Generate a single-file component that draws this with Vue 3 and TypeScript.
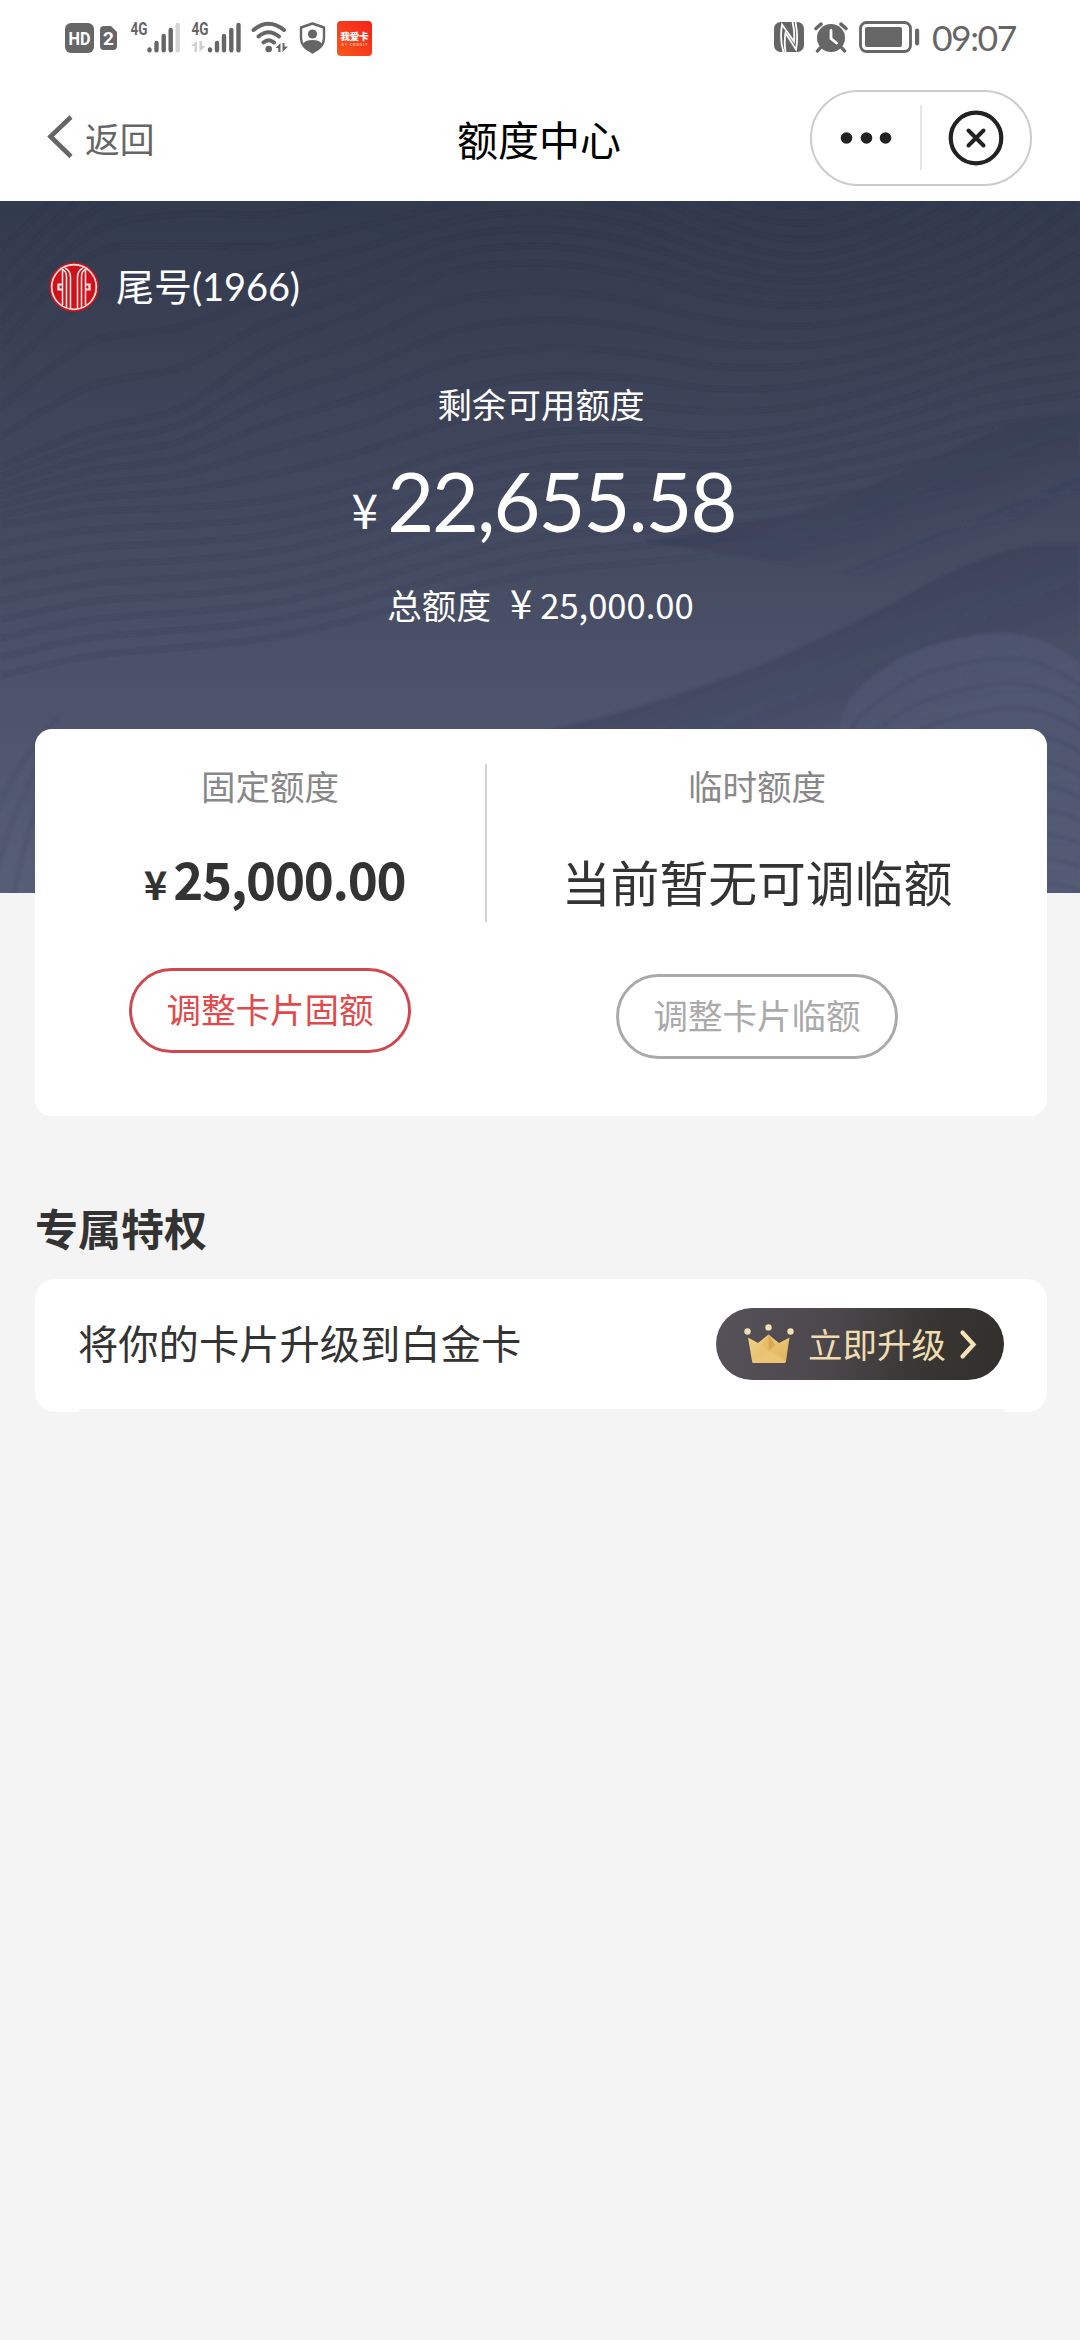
<script setup lang="ts">
type Point = [number, number]

// Contour key curves: heights sampled every 90px across the hero.
const STEP = 90
const keyCurves: number[][] = [
  [250, 170, 120, 120, 110, 100, 110, 140, 175, 190, 160, 90, 0],
  [347, 256, 246, 246, 227, 205, 195, 208, 240, 256, 230, 180, 110],
  [467, 430, 408, 347, 313, 272, 263, 275, 298, 306, 293, 265, 200],
  [525, 512, 508, 500, 480, 452, 433, 430, 435, 424, 400, 370, 355],
  [695, 674, 665, 655, 635, 610, 590, 580, 570, 560, 550, 540, 530],
]
const linesBetween = [4, 4, 6, 9]

function smooth(points: Point[]): string {
  let d = `M${points[0][0]} ${points[0][1]}`
  for (let i = 0; i < points.length - 1; i++) {
    const a = points[Math.max(i - 1, 0)]
    const b = points[i]
    const c = points[i + 1]
    const e = points[Math.min(i + 2, points.length - 1)]
    d += `C${(b[0] + (c[0] - a[0]) / 6).toFixed(1)} ${(b[1] + (c[1] - a[1]) / 6).toFixed(1)} `
    d += `${(c[0] - (e[0] - b[0]) / 6).toFixed(1)} ${(c[1] - (e[1] - b[1]) / 6).toFixed(1)} ${c[0]} ${c[1]}`
  }
  return d
}

const contours: string[] = []
linesBetween.forEach((count, k) => {
  for (let n = 0; n < count; n++) {
    const t = n / count
    contours.push(
      smooth(keyCurves[k].map((y, i): Point => [i * STEP, y + (keyCurves[k + 1][i] - y) * t])),
    )
  }
})

const ridgeOne = smooth([[640, 541], [690, 534], [747, 523], [798, 512], [850, 493], [919, 463], [988, 433], [1040, 418], [1080, 413]])
const ridgeTwo = smooth([[480, 745], [620, 712], [747, 670], [815, 640], [884, 607], [953, 570], [1022, 547], [1080, 543]])
const hill = smooth([[836, 745], [850, 700], [880, 672], [919, 650], [988, 634], [1040, 640], [1080, 662]])
const hillLines = [1, 2, 3, 4, 5, 6, 7, 8, 9, 10]
const edgeLines = [0, 1, 2, 3]
</script>

<template>
  <div class="screen">
    <div class="status">
      <svg class="hd" width="29" height="30" viewBox="0 0 29 30">
        <rect width="29" height="30" rx="6" fill="#666" />
        <text x="14.5" y="21.5" text-anchor="middle" textLength="22" lengthAdjust="spacingAndGlyphs" font-size="18" font-weight="700" fill="#fff">HD</text>
      </svg>
      <svg class="sim" width="17" height="24" viewBox="0 0 17 24">
        <path d="M4 0H11L17 6V20Q17 24 13 24H4Q0 24 0 20V4Q0 0 4 0Z" fill="#666" />
        <text x="8.5" y="19" text-anchor="middle" font-size="19" font-weight="700" fill="#fff">2</text>
      </svg>
      <svg class="sig sig1" width="50" height="42" viewBox="0 -10 50 42">
        <text x="0.500" y="14" font-size="18.500" font-weight="700" textLength="17" lengthAdjust="spacingAndGlyphs" fill="#666">4G</text>
        <g stroke="#666" stroke-width="4.4" stroke-linecap="round">
          <path d="M19.5 28.4V29.2M26.5 22V29.2M33.7 15V29.2M40.7 9V29.2" />
          <path d="M47.7 4V29.2" stroke="#d5d5d5" />
        </g>
      </svg>
      <svg class="sig sig2" width="50" height="42" viewBox="0 -10 50 42">
        <text x="0.500" y="14" font-size="18.500" font-weight="700" textLength="17" lengthAdjust="spacingAndGlyphs" fill="#666">4G</text>
        <path d="M6 20V31H3.5V25H0ZM8.500 20H11V25H14.500L8.500 31Z" fill="#d0d0d0" />
        <path d="M19 28.400V29.200M26 22V29.200M33 15V29.200M40.300 9V29.200M47.500 4V29.200" stroke="#666" stroke-width="4.400" stroke-linecap="round" />
      </svg>
      <svg class="wifi" width="38" height="32" viewBox="0 0 38 32">
        <g fill="none" stroke="#666" stroke-width="4" stroke-linecap="round">
          <path d="M2.500 9Q17.500 -3.500 33 9" />
          <path d="M7.500 15.500Q17.500 7 28 15.500" />
          <path d="M12.500 21.500Q17.500 17 23 21.500" />
        </g>
        <circle cx="17.700" cy="28" r="3.300" fill="#666" />
        <path d="M29.500 22V31H27.300V27H24.500ZM31.500 22V31L37 25.500H33.500V22Z" fill="#666" />
      </svg>
      <svg class="shield" width="27" height="32" viewBox="0 0 27 32">
        <path d="M13.500 1.500L25 5.500V16Q25 25 13.500 30.500Q2 25 2 16V5.500Z" fill="#fff" stroke="#666" stroke-width="2.400" stroke-linejoin="round" />
        <circle cx="13.500" cy="12" r="4.600" fill="#666" />
        <path d="M4 22Q6 18 13.500 18Q21 18 23 22Q20 27 13.500 30.500Q7 27 4 22Z" fill="#666" />
      </svg>
      <svg class="app" width="35" height="35" viewBox="0 0 35 35">
        <defs>
          <linearGradient id="appRed" x1="1" y1="0" x2="0" y2="1">
            <stop offset="0" stop-color="#f51f1b" />
            <stop offset="1" stop-color="#f75a1c" />
          </linearGradient>
        </defs>
        <rect width="35" height="35" rx="4" fill="url(#appRed)" />
        <text x="17.500" y="19" text-anchor="middle" font-size="9.500" font-weight="900" textLength="28" fill="#fff">我爱卡</text>
        <text x="17.500" y="25" text-anchor="middle" font-size="4" font-weight="700" textLength="26" fill="#ffc0a0">51 CREDIT</text>
      </svg>
      <svg class="nfc" width="30" height="30" viewBox="0 0 30 30">
        <rect width="30" height="30" rx="6.500" fill="#666" />
        <path d="M9.500 30Q5.500 18 8 2.500L20 19.500Q21 10 18.500 0" fill="none" stroke="#fff" stroke-width="1.800" />
        <path d="M11.500 30Q10 20 11.500 11L22 27.500Q24.500 15 21.500 0" fill="none" stroke="#fff" stroke-width="1.800" />
      </svg>
      <svg class="alarm" width="34" height="31" viewBox="0 0 34 31">
        <circle cx="17" cy="16" r="14" fill="#666" />
        <path d="M2 6.500L7 2.200M32 6.500L27 2.200M6 26L3.500 29M28 26L30.500 29" stroke="#666" stroke-width="3.500" stroke-linecap="round" />
        <path d="M17 8.500V16.500L22.500 21" fill="none" stroke="#fff" stroke-width="2.800" stroke-linecap="round" />
      </svg>
      <svg class="battery" width="61" height="32" viewBox="0 0 61 32">
        <rect x="1.500" y="1.500" width="50" height="29" rx="6" fill="none" stroke="#666" stroke-width="2.800" />
        <rect x="6" y="6" width="37" height="20" rx="2" fill="#666" />
        <rect x="56" y="7.500" width="4.200" height="17" rx="2" fill="#666" />
      </svg>
      <span class="time">09:07</span>
    </div>

    <div class="nav">
      <div class="back">
        <svg width="27" height="44" viewBox="0 0 27 44">
          <path d="M25 2L4.500 21.500L25 41.500" fill="none" stroke="#666" stroke-width="4.600" />
        </svg>
        <span>返回</span>
      </div>
      <div class="title">额度中心</div>
      <div class="capsule">
        <svg class="dots" width="54" height="14" viewBox="0 0 54 14">
          <circle cx="7.500" cy="7" r="5.800" fill="#222" />
          <circle cx="27.500" cy="7" r="5.800" fill="#222" />
          <circle cx="46.500" cy="7" r="5.800" fill="#222" />
        </svg>
        <i class="bar"></i>
        <svg width="56" height="56" viewBox="0 0 56 56">
          <circle cx="28" cy="28" r="25.300" fill="none" stroke="#222" stroke-width="4.200" />
          <path d="M20.500 20.500L35.500 35.500M35.500 20.500L20.500 35.500" stroke="#222" stroke-width="4" stroke-linecap="round" />
        </svg>
      </div>
    </div>

    <div class="hero">
      <svg class="waves" width="1080" height="692" viewBox="0 201 1080 692">
        <defs>
          <linearGradient id="shadeOne" gradientUnits="userSpaceOnUse" x1="900" y1="460" x2="940" y2="560">
            <stop offset="0" stop-color="#2b2f4c" stop-opacity=".3" />
            <stop offset="1" stop-color="#2b2f4c" stop-opacity="0" />
          </linearGradient>
          <linearGradient id="shadeTwo" gradientUnits="userSpaceOnUse" x1="850" y1="615" x2="900" y2="735">
            <stop offset="0" stop-color="#2b2f4c" stop-opacity=".3" />
            <stop offset="1" stop-color="#2b2f4c" stop-opacity=".06" />
          </linearGradient>
          <linearGradient id="shadeHill" x1="0" y1="0" x2="0" y2="1">
            <stop offset="0" stop-color="#5a6182" stop-opacity=".4" />
            <stop offset="1" stop-color="#5a6182" stop-opacity="0" />
          </linearGradient>
          <linearGradient id="fadeRight" gradientUnits="userSpaceOnUse" x1="600" y1="430" x2="760" y2="560">
            <stop offset="0" stop-color="#fff" />
            <stop offset=".5" stop-color="#fff" />
            <stop offset="1" stop-color="#333" />
          </linearGradient>
          <mask id="contourMask" maskUnits="userSpaceOnUse" x="0" y="201" width="1080" height="692">
            <rect x="0" y="201" width="1080" height="692" fill="#fff" />
            <path :d="ridgeOne + 'V893H480V560Z'" fill="url(#fadeRight)" />
          </mask>
          <filter id="soft" x="-5%" y="-5%" width="110%" height="110%">
            <feGaussianBlur stdDeviation="1.400" />
          </filter>
        </defs>
        <g filter="url(#soft)">
          <g fill="none" stroke="#272c48" stroke-opacity=".18" stroke-width="4" mask="url(#contourMask)">
            <path v-for="(d, i) in contours" :key="i" :d="d" />
          </g>
          <path :d="ridgeOne + 'V640C900 575 760 560 640 541Z'" fill="url(#shadeOne)" />
          <path :d="ridgeTwo + 'V893H480Z'" fill="url(#shadeTwo)" />
          <path :d="hill + 'V893H836Z'" fill="url(#shadeHill)" />
          <g fill="none" stroke="#3a4060" stroke-opacity=".24" stroke-width="4">
            <path v-for="n in hillLines" :key="n" :d="hill" :transform="`translate(${n * 4} ${n * 25})`" />
            <path v-for="n in edgeLines" :key="'e' + n" :d="`M${-30 + n * 22} 893Q${-10 + n * 20} ${790 + n * 10} 60 ${715 + n * 22}`" />
          </g>
        </g>
      </svg>
      <div class="bank">
        <svg width="50" height="50" viewBox="0 0 50 50">
          <circle cx="25" cy="25" r="24.800" fill="#d0121b" />
          <circle cx="25" cy="25" r="22.300" fill="none" stroke="#ffe3e3" stroke-width="1.700" />
          <g fill="none" stroke="#ffe9e9" stroke-width="1.500">
            <path d="M13.500 7V43M36.500 7V43" />
            <path d="M13.500 7.500Q17.500 9 17.500 15V46M36.500 7.500Q32.500 9 32.500 15V46" />
            <path d="M16 6Q21.500 9 21.500 15V47M34 6Q28.500 9 28.500 15V47" />
            <path d="M13 22.500H9.500V27.500H13M37 22.500H40.500V27.500H37" stroke-width="2.200" />
          </g>
        </svg>
        <span>尾号<b>(1966)</b></span>
      </div>
      <div class="remain-label">剩余可用额度</div>
      <div class="remain"><span class="yen">¥</span><span class="num">22,655.58</span></div>
      <div class="total"><span>总额度</span><span class="yen">¥</span><span class="num">25,000.00</span></div>
    </div>

    <div class="card">
      <div class="col fixed">
        <div class="label">固定额度</div>
        <div class="amount"><span class="yen">¥</span><span class="num">25,000.00</span></div>
        <button class="btn red">调整卡片固额</button>
      </div>
      <i class="rule"></i>
      <div class="col temp">
        <div class="label">临时额度</div>
        <div class="none">当前暂无可调临额</div>
        <button class="btn grey">调整卡片临额</button>
      </div>
    </div>

    <h2 class="section">专属特权</h2>
    <div class="upgrade">
      <div class="row">
        <span class="offer">将你的卡片升级到白金卡</span>
        <div class="pill">
          <svg width="50" height="40" viewBox="0 0 50 40">
            <defs>
              <linearGradient id="gold" x1="0" y1="0" x2="1" y2="1">
                <stop offset="0" stop-color="#f3d488" />
                <stop offset="1" stop-color="#dfb05c" />
              </linearGradient>
            </defs>
            <path d="M4 13.500L14 19L24.500 10.500L35 19L45.500 13.500L42 37Q41.700 39 40 39H10Q8.300 39 8 37Z" fill="url(#gold)" />
            <path d="M24.500 10.500L18 21L24.500 27L31 21Z" fill="#e8bd66" />
            <path d="M24.500 10.500V27L31 21Z" fill="#d9a94f" />
            <path d="M8 37L24.500 27L42 37Q41 39 40 39H10Q8.300 39 8 37Z" fill="#ecc676" />
            <g fill="#f3e0b3">
              <circle cx="3.500" cy="7.500" r="3.200" />
              <circle cx="24.500" cy="3.400" r="3.200" />
              <circle cx="46.500" cy="7.500" r="3.200" />
            </g>
          </svg>
          <span>立即升级</span>
          <svg class="go" width="18" height="31" viewBox="0 0 18 31">
            <path d="M3.500 3.500L14.500 15.500L3.500 27.500" fill="none" stroke="#f6e2b9" stroke-width="4.200" stroke-linecap="round" />
          </svg>
        </div>
      </div>
    </div>
  </div>
</template>

<style>
body {
  background: #f4f4f4;
}
</style>

<style scoped>
.screen {
  width: 1080px;
  height: 2340px;
  overflow: hidden;
  background: #f4f4f4;
  color: #333;
  font-family: "Noto Sans CJK SC", sans-serif;
}
.screen svg {
  display: block;
  flex: none;
}
.status {
  box-sizing: border-box;
  height: 73px;
  padding: 21px 0 0 65px;
  display: flex;
  align-items: flex-start;
  background: #fff;
}
.status text {
  font-family: Roboto, "Noto Sans CJK SC", sans-serif;
}
.hd { margin-top: 2px; }
.sim { margin: 5px 0 0 6px; }
.sig { margin-top: -10px; }
.sig1 { margin-left: 13px; }
.sig2 { margin-left: 11px; }
.wifi { margin-left: 10px; }
.shield { margin: 1px 0 0 10px; }
.status .app { margin-left: 11px; }
.nfc { margin: 1px 0 0 402px; }
.alarm { margin: 1px 0 0 10px; }
.battery { margin-left: 11px; }
.time {
  margin: -4px 0 0 12px;
  font-family: Lato, sans-serif;
  font-size: 35.5px;
  line-height: 42px;
  letter-spacing: -1.5px;
  color: #666;
}
.nav {
  box-sizing: border-box;
  height: 128px;
  padding: 0 48px 0 46px;
  display: grid;
  grid-template-columns: 1fr auto 1fr;
  align-items: center;
  background: #fff;
}
.back {
  display: flex;
  align-items: center;
  color: #666;
  font-size: 34.8px;
  line-height: 50px;
}
.back span {
  margin: 1px 0 0 12px;
}
.title {
  color: #000;
  font-size: 41px;
  line-height: 60px;
  padding-top: 1px;
}
.capsule {
  justify-self: end;
  box-sizing: border-box;
  width: 222px;
  height: 96px;
  margin-top: 1px;
  border: 2px solid #ccc;
  border-radius: 48px;
  display: flex;
  align-items: center;
}
.dots { margin-left: 27px; }
.capsule .bar {
  width: 2px;
  height: 65px;
  margin: 0 26px 0 27px;
  background: #e6e6e6;
}
.hero {
  position: relative;
  box-sizing: border-box;
  height: 692px;
  padding-top: 60px;
  background: linear-gradient(#323a4d, #3e4459 32%, #4a5168 67%, #575e78);
  color: #fff;
}
.waves {
  position: absolute;
  inset: 0;
}
.bank,
.remain-label,
.remain,
.total {
  position: relative;
}
.bank {
  display: flex;
  align-items: center;
  height: 52px;
  padding-left: 49px;
  font-size: 38px;
  line-height: 52px;
}
.bank span {
  margin: -4px 0 0 17px;
}
.bank b {
  font-family: Lato, sans-serif;
  font-weight: 400;
  letter-spacing: -0.1px;
}
.remain-label {
  margin-top: 65px;
  font-size: 34.5px;
  line-height: 50px;
  text-align: center;
  padding-left: 2px;
}
.remain {
  display: flex;
  align-items: baseline;
  justify-content: center;
  height: 100px;
  margin-top: 23px;
  padding-left: 7px;
  line-height: 100px;
}
.remain .yen {
  position: relative;
  top: -3px;
  font-size: 48px;
  margin-right: 9px;
}
.remain .num {
  font-family: Lato, sans-serif;
  font-size: 81px;
  letter-spacing: -2px;
}
.total {
  display: flex;
  align-items: baseline;
  justify-content: center;
  height: 50px;
  margin-top: 26px;
  padding-left: 1px;
  font-size: 34.6px;
  line-height: 50px;
}
.total .yen {
  font-size: 40px;
  margin: 0 8px 0 19px;
}
.card {
  position: relative;
  box-sizing: border-box;
  width: 1012px;
  height: 387px;
  margin: -164px 0 0 35px;
  padding: 35px 20px 0;
  display: flex;
  align-items: flex-start;
  background: #fff;
  border-radius: 17px;
}
.col {
  display: flex;
  flex-direction: column;
  align-items: center;
}
.fixed { width: 430px; }
.temp { width: 540px; }
.rule {
  width: 2px;
  height: 158px;
  background: #d2d2d2;
}
.label {
  margin-top: -2px;
  font-size: 34.5px;
  line-height: 46px;
  color: #888;
}
.amount {
  display: flex;
  align-items: baseline;
  height: 70px;
  margin-top: 35px;
  padding-left: 9px;
  line-height: 70px;
  font-weight: 700;
}
.amount .yen {
  font-size: 40px;
  margin-right: 6px;
}
.amount .num {
  font-size: 51px;
  letter-spacing: -1.3px;
}
.none {
  height: 70px;
  margin-top: 38px;
  font-size: 48.8px;
  line-height: 70px;
}
.btn {
  box-sizing: border-box;
  width: 282px;
  height: 85px;
  margin: 55px 0 0;
  padding: 0 0 5px;
  border: 3px solid;
  border-radius: 43px;
  background: none;
  font-family: inherit;
  font-size: 34.5px;
  line-height: 74px;
}
.red {
  color: #e04a4c;
  border-color: #d0484f;
}
.grey {
  color: #aaa;
  margin-top: 58px;
}
.section {
  margin: 81px 0 0 35px;
  font-size: 43px;
  line-height: 60px;
  font-weight: 700;
}
.upgrade {
  box-sizing: border-box;
  width: 1012px;
  height: 133px;
  margin: 22px 0 0 35px;
  padding: 0 43px 0 44px;
  background: #fff;
  border-radius: 20px;
}
.row {
  box-sizing: border-box;
  height: 133px;
  border-bottom: 3px solid #f4f4f4;
  display: flex;
  align-items: center;
  justify-content: space-between;
  font-size: 40.3px;
  line-height: 60px;
}
.offer {
  margin: -4px 0 0 -1px;
}
.pill {
  box-sizing: border-box;
  width: 288px;
  height: 72px;
  padding-left: 28px;
  display: flex;
  align-items: center;
  border-radius: 36px;
  background: linear-gradient(100deg, #56525a, #4b474b 40%, #363532 75%, #32302c);
  color: #f1dcb0;
  font-size: 34.5px;
  line-height: 50px;
}
.pill span {
  margin: -2px 0 0 14px;
}
.go {
  margin-left: 13px;
}
</style>
